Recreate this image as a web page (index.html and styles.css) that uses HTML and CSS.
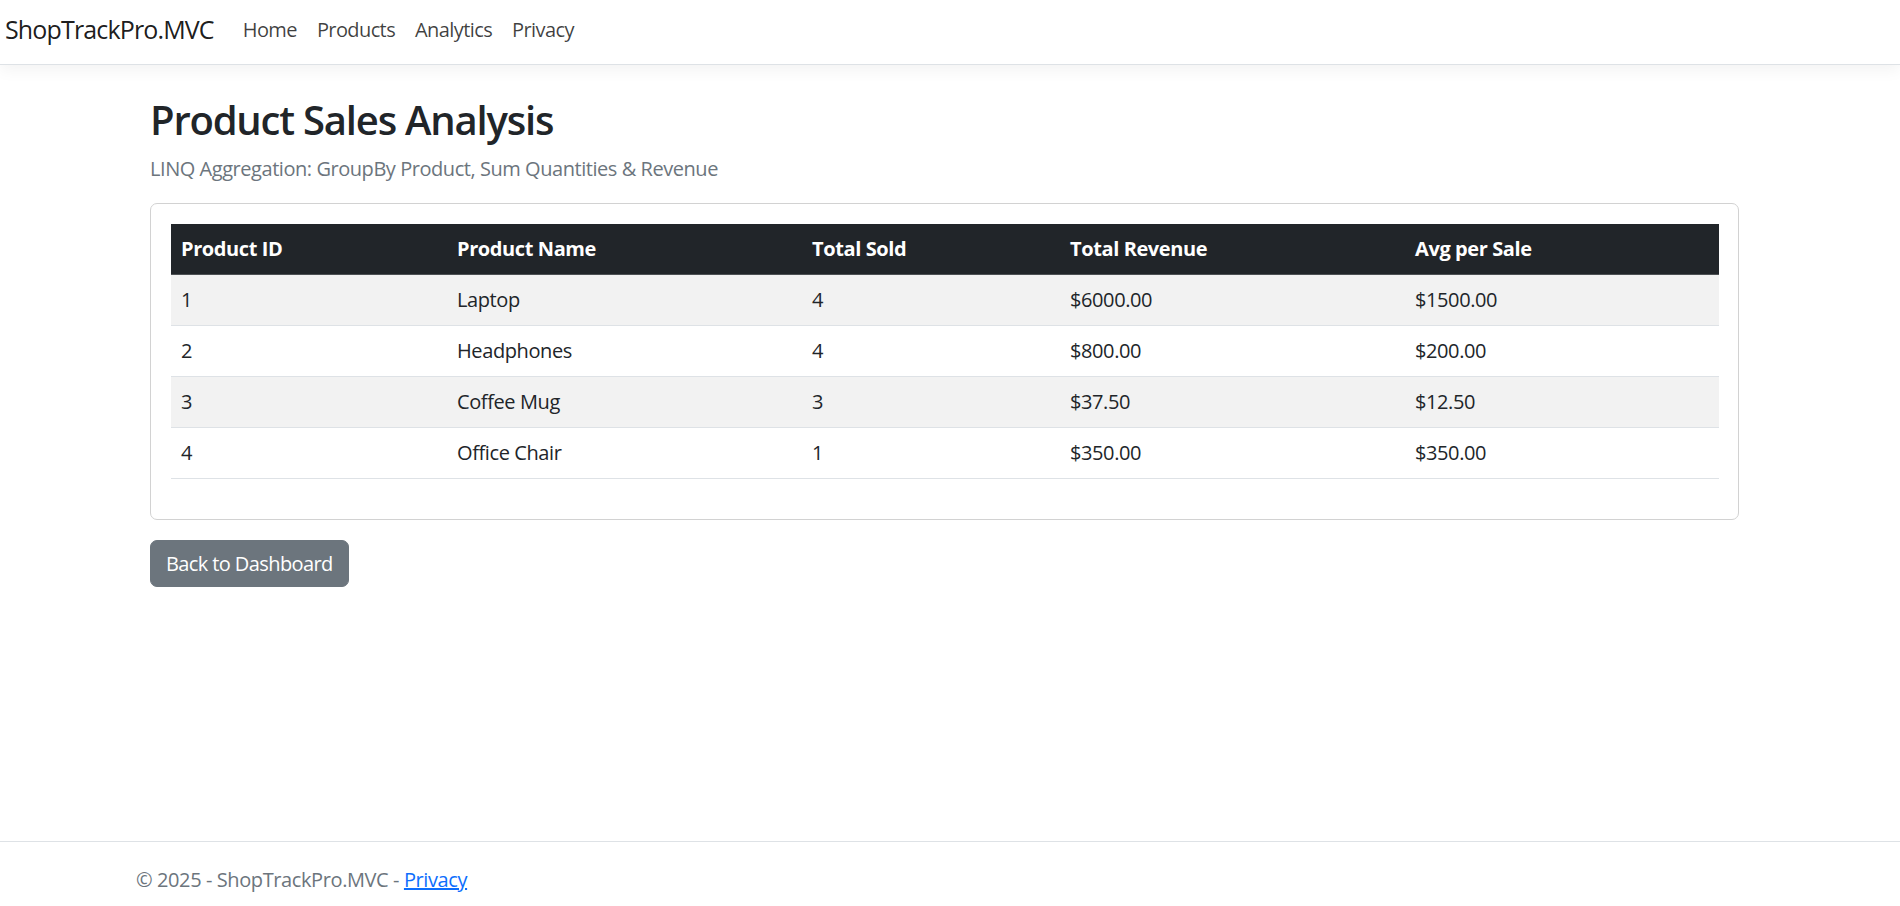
FILE: index.html
```html
<!DOCTYPE html>
<html lang="en">
<head>
<meta charset="utf-8">
<title>Product Sales Analysis - ShopTrackPro.MVC</title>
<link rel="stylesheet" href="styles.css">
</head>
<body>
<header class="topbar">
  <nav class="nav">
    <a class="brand" href="#">ShopTrackPro.MVC</a>
    <ul class="nav-links">
      <li><a href="#">Home</a></li>
      <li><a href="#">Products</a></li>
      <li><a href="#">Analytics</a></li>
      <li><a href="#">Privacy</a></li>
    </ul>
  </nav>
</header>
<main class="page">
  <h2 class="title">Product Sales Analysis</h2>
  <p class="subtitle">LINQ Aggregation: GroupBy Product, Sum Quantities &amp; Revenue</p>
  <section class="card">
    <table class="grid">
      <colgroup>
        <col class="c1"><col class="c2"><col class="c3"><col class="c4"><col class="c5">
      </colgroup>
      <thead>
        <tr><th>Product ID</th><th>Product Name</th><th>Total Sold</th><th>Total Revenue</th><th>Avg per Sale</th></tr>
      </thead>
      <tbody>
        <tr><td>1</td><td>Laptop</td><td>4</td><td>$6000.00</td><td>$1500.00</td></tr>
        <tr><td>2</td><td>Headphones</td><td>4</td><td>$800.00</td><td>$200.00</td></tr>
        <tr><td>3</td><td>Coffee Mug</td><td>3</td><td>$37.50</td><td>$12.50</td></tr>
        <tr><td>4</td><td>Office Chair</td><td>1</td><td>$350.00</td><td>$350.00</td></tr>
      </tbody>
    </table>
  </section>
  <a class="btn" href="#">Back to Dashboard</a>
</main>
<footer class="footer">
  <div class="footer-inner">&copy; 2025 - ShopTrackPro.MVC - <a href="#">Privacy</a></div>
</footer>
</body>
</html>
```
FILE: styles.css
```css
* { box-sizing: border-box; }
html, body { margin: 0; padding: 0; }
body {
  font-family: "Open Sans", "Noto Sans", "Liberation Sans", sans-serif;
  font-size: 20px;
  line-height: 1.5;
  color: #212529;
  background: #fff;
  min-height: 100vh;
  display: flex;
  flex-direction: column;
}
a { text-decoration: none; }

.topbar {
  height: 65px;
  border-bottom: 1px solid #dee2e6;
  box-shadow: 0 5px 15px rgba(0,0,0,0.05);
  background: #fff;
}
.nav {
  height: 100%;
  display: flex;
  align-items: center;
  padding: 0 0 5px 5px;
}
.brand {
  font-size: 25px;
  color: rgba(0,0,0,0.9);
  margin-right: 19px;
  letter-spacing: -0.85px;
}
.nav-links {
  display: flex;
  list-style: none;
  margin: 0;
  padding: 0;
}
.nav-links a {
  display: block;
  padding: 0 10px;
  color: rgba(0,0,0,0.75);
  letter-spacing: -0.6px;
}

.page {
  flex: 1;
  padding: 31px 0 0 150px;
  width: 1739px;
}
.title {
  font-size: 40px;
  font-weight: 600;
  line-height: 1.2;
  margin: 0 0 10px;
  letter-spacing: -1.2px;
}
.subtitle {
  margin: 0 0 19px;
  color: #6c757d;
  letter-spacing: -0.45px;
}
.card {
  border: 1px solid #d2d2d2;
  border-radius: 7px;
  padding: 20px;
  margin-bottom: 20px;
}
.grid {
  width: 100%;
  border-collapse: collapse;
  margin-bottom: 20px;
  table-layout: fixed;
}
.c1 { width: 276px; }
.c2 { width: 355px; }
.c3 { width: 258px; }
.c4 { width: 345px; }
.c5 { width: 314px; }
.grid th, .grid td {
  text-align: left;
  padding: 10px;
  line-height: 30px;
  border-bottom: 1px solid #dee2e6;
  letter-spacing: -0.4px;
}
.grid th {
  background: #212529;
  color: #fff;
  font-weight: 700;
  border-bottom-color: #4d5154;
}
.grid tbody tr:nth-child(odd) td { background: #f2f2f2; }

.btn {
  display: inline-block;
  background: #6c757d;
  color: #fff;
  border: 1px solid #6c757d;
  border-radius: 7px;
  padding: 7.5px 15px;
  line-height: 30px;
  letter-spacing: -0.6px;
}

.footer {
  height: 65px;
  border-top: 1px solid #dee2e6;
  color: #6c757d;
  padding-top: 23px;
  white-space: nowrap;
}
.footer-inner { padding-left: 136px; line-height: 30px; letter-spacing: -0.4px; }
.footer a { color: #0d6efd; text-decoration: underline; }
```
